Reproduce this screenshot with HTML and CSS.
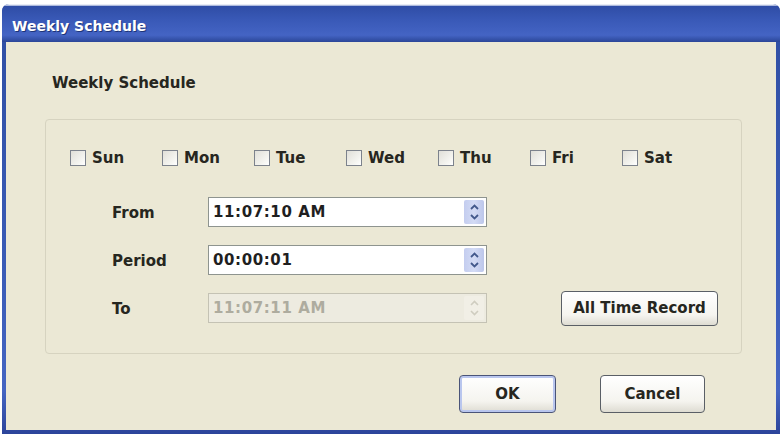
FILE: index.html
```html
<html lang="en"><head>
    <meta charset="UTF-8">
    <meta name="viewport" content="width=device-width, initial-scale=1.0">
    <title>Weekly Schedule</title>
    <link rel="stylesheet" href="styles.css">
</head>
<body>

<div class="window">
    <div class="titlebar">Weekly Schedule</div>
    <div class="client">
        <h1>Weekly Schedule</h1>

        <div class="group">
            <div class="days">
                <label class="day"><span class="check"></span>Sun</label>
                <label class="day"><span class="check"></span>Mon</label>
                <label class="day"><span class="check"></span>Tue</label>
                <label class="day"><span class="check"></span>Wed</label>
                <label class="day"><span class="check"></span>Thu</label>
                <label class="day"><span class="check"></span>Fri</label>
                <label class="day"><span class="check"></span>Sat</label>
            </div>

            <div class="row">
                <span class="row-label">From</span>
                <div class="field">
                    <span class="value">11:07:10 AM</span>
                    <span class="spin">
                        <svg width="9" height="6" viewBox="0 0 9 6"><path d="M1 5 L4.5 1.5 L8 5" fill="none" stroke="#43598c" stroke-width="1.8"/></svg>
                        <svg width="9" height="6" viewBox="0 0 9 6"><path d="M1 1 L4.5 4.5 L8 1" fill="none" stroke="#43598c" stroke-width="1.8"/></svg>
                    </span>
                </div>
            </div>
            <div class="row">
                <span class="row-label">Period</span>
                <div class="field">
                    <span class="value">00:00:01</span>
                    <span class="spin">
                        <svg width="9" height="6" viewBox="0 0 9 6"><path d="M1 5 L4.5 1.5 L8 5" fill="none" stroke="#43598c" stroke-width="1.8"/></svg>
                        <svg width="9" height="6" viewBox="0 0 9 6"><path d="M1 1 L4.5 4.5 L8 1" fill="none" stroke="#43598c" stroke-width="1.8"/></svg>
                    </span>
                </div>
            </div>
            <div class="row">
                <span class="row-label">To</span>
                <div class="field disabled">
                    <span class="value">11:07:11 AM</span>
                    <span class="spin">
                        <svg width="9" height="6" viewBox="0 0 9 6"><path d="M1 5 L4.5 1.5 L8 5" fill="none" stroke="#cfcdc0" stroke-width="1.6"/></svg>
                        <svg width="9" height="6" viewBox="0 0 9 6"><path d="M1 1 L4.5 4.5 L8 1" fill="none" stroke="#cfcdc0" stroke-width="1.6"/></svg>
                    </span>
                </div>
                <button class="btn all-time">All Time Record</button>
            </div>
        </div>

        <div class="actions">
            <button class="btn default">OK</button>
            <button class="btn">Cancel</button>
        </div>
    </div>
</div>

</body></html>
```

FILE: styles.css
```css
body {
    font-family: 'DejaVu Sans', 'Liberation Sans', sans-serif;
    background-color: #fff;
    margin: 0;
    padding: 0;
    overflow: hidden;
}
.window {
    width: 778px;
    height: 430px;
    margin: 4px 0 0 2px;
    padding: 0 4px 4px;
    box-sizing: border-box;
    border-radius: 7px 7px 0 0;
    background: linear-gradient(to bottom, #2f4ea3 0%, #3a5bb6 60%, #4565c2 90%, #2c449a 100%);
    display: flex;
    flex-direction: column;
}
.titlebar {
    height: 38px;
    flex-shrink: 0;
    box-sizing: border-box;
    margin: 0 -4px;
    padding: 5px 0 0 10px;
    line-height: 34px;
    font-size: 14px;
    font-weight: bold;
    color: #fff;
    text-shadow: 1px 1px 0 #1d3478;
    background: linear-gradient(to bottom, #e8ecf6 0%, #e8ecf6 3%, #2f4da6 6%, #3a5ab8 45%, #4464c4 82%, #2b4698 100%);
    border-radius: 7px 7px 0 0;
}
.client {
    flex: 1;
    background-color: #ebe8d5;
    padding-top: 32px;
}
h1 {
    margin: 0 0 27px 46px;
    font-size: 15px;
    line-height: 18px;
    color: #262620;
}
.group {
    margin-left: 39px;
    width: 697px;
    height: 235px;
    box-sizing: border-box;
    border: 1px solid #d6d3c0;
    border-radius: 4px;
    padding: 29px 0 0 24px;
}
.days {
    display: flex;
    height: 18px;
    margin-bottom: 30px;
}
.day {
    width: 92px;
    display: flex;
    align-items: center;
    font-size: 15px;
    font-weight: bold;
    color: #262620;
}
.check {
    width: 14px;
    height: 14px;
    border: 1px solid #7c828c;
    background: linear-gradient(135deg, #e0dfd8 0%, #f5f5f1 70%, #fff 100%);
    margin-right: 6px;
}
.row {
    display: flex;
    align-items: center;
    height: 30px;
    margin-bottom: 18px;
    padding-left: 42px;
}
.row-label {
    width: 96px;
    font-size: 15px;
    font-weight: bold;
    color: #262620;
    padding-top: 2px;
}
.field {
    width: 279px;
    height: 30px;
    box-sizing: border-box;
    border: 1px solid #8e948f;
    background-color: #fff;
    display: flex;
    align-items: center;
}
.value {
    flex: 1;
    padding-left: 4px;
    font-size: 15px;
    font-weight: bold;
    color: #1f1f1f;
    letter-spacing: 0.6px;
}
.spin {
    width: 20px;
    height: 24px;
    margin-right: 2px;
    background: linear-gradient(to right, #c4cdef, #d3dbf5 50%, #bcc6ea);
    border-radius: 2px;
    display: flex;
    flex-direction: column;
    align-items: center;
    justify-content: space-around;
    padding: 2px 0;
    box-sizing: border-box;
}
.disabled {
    background-color: #edebe0;
    border-color: #c4c2b4;
}
.disabled .value {
    color: #aeac9f;
}
.disabled .spin {
    background: #f1efe6;
}
.btn {
    font-family: 'DejaVu Sans', 'Liberation Sans', sans-serif;
    font-size: 15px;
    font-weight: bold;
    color: #262620;
    background: linear-gradient(to bottom, #ffffff 0%, #f5f4ef 70%, #dedcd2 100%);
    border: 1px solid #5a5f66;
    border-radius: 4px;
    padding: 0;
    cursor: pointer;
}
.all-time {
    width: 157px;
    height: 35px;
    margin-left: 74px;
}
.actions {
    display: flex;
    justify-content: flex-end;
    gap: 44px;
    margin: 21px 71px 0 0;
}
.actions .btn {
    height: 38px;
    width: 105px;
}
.actions .default {
    width: 97px;
    border-color: #4a5478;
    box-shadow: inset 0 0 0 2px #b9c6ee;
}
```
